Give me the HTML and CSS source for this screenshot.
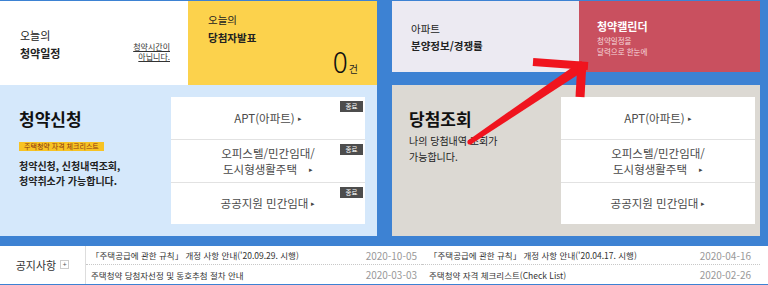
FILE: index.html
```html
<!DOCTYPE html>
<html lang="ko">
<head>
    <meta charset="UTF-8">
    <meta name="viewport" content="width=device-width, initial-scale=1.0">
    <title>청약홈</title>
    <link rel="stylesheet" href="styles.css">
</head>
<body>
    <div class="page">
        <!-- 상단 카드 -->
        <div class="top-row">
            <div class="group group-left">
                <div class="card card-today">
                    <div class="card-title">
                        <p>오늘의</p>
                        <p class="strong">청약일정</p>
                    </div>
                    <a href="#" class="today-link">청약시간이<br>아닙니다.</a>
                </div>
                <div class="card card-winner">
                    <p>오늘의</p>
                    <p class="strong">당첨자발표</p>
                    <div class="count"><span class="num">0</span><span class="unit">건</span></div>
                </div>
            </div>
            <div class="group group-right">
                <div class="card card-apt">
                    <p>아파트</p>
                    <p class="strong">분양정보/경쟁률</p>
                </div>
                <div class="card card-calendar">
                    <p class="strong">청약캘린더</p>
                    <p class="small">청약일정을</p>
                    <p class="small">달력으로 한눈에</p>
                </div>
            </div>
        </div>

        <!-- 청약신청 / 당첨조회 -->
        <div class="mid-row">
            <div class="panel panel-apply">
                <div class="panel-text">
                    <h2>청약신청</h2>
                    <span class="check-badge">주택청약 자격 체크리스트</span>
                    <p class="desc bold">청약신청, 신청내역조회,<br>청약취소가 가능합니다.</p>
                </div>
                <ul class="menu-box">
                    <li><span>APT(아파트)<i class="tri">&#9656;</i></span><em class="end">종료</em></li>
                    <li><span>오피스텔/민간임대/<br>도시형생활주택<i class="tri wide">&#9656;</i></span><em class="end">종료</em></li>
                    <li><span>공공지원 민간임대<i class="tri">&#9656;</i></span><em class="end">종료</em></li>
                </ul>
            </div>
            <div class="panel panel-result">
                <div class="panel-text">
                    <h2>당첨조회</h2>
                    <p class="desc">나의 당첨내역 조회가<br>가능합니다.</p>
                </div>
                <ul class="menu-box">
                    <li><span>APT(아파트)<i class="tri">&#9656;</i></span></li>
                    <li><span>오피스텔/민간임대/<br>도시형생활주택<i class="tri wide">&#9656;</i></span></li>
                    <li><span>공공지원 민간임대<i class="tri">&#9656;</i></span></li>
                </ul>
            </div>
        </div>

        <!-- 공지사항 -->
        <div class="notice">
            <div class="notice-title">공지사항 <span class="plus">+</span></div>
            <ul class="notice-list">
                <li><a href="#">「주택공급에 관한 규칙」 개정 사항 안내('20.09.29. 시행)</a><span class="date">2020-10-05</span></li>
                <li><a href="#">주택청약 당첨자선정 및 동호추첨 절차 안내</a><span class="date">2020-03-03</span></li>
            </ul>
            <ul class="notice-list second">
                <li><a href="#">「주택공급에 관한 규칙」 개정 사항 안내('20.04.17. 시행)</a><span class="date">2020-04-16</span></li>
                <li><a href="#">주택청약 자격 체크리스트(Check List)</a><span class="date">2020-02-26</span></li>
            </ul>
        </div>

        <!-- 빨간 화살표 표시 -->
        <svg class="arrow-mark" width="768" height="285" viewBox="0 0 768 285">
            <polygon points="468.6,139.9 581.2,60.9 586.8,69.1 471.4,144.1" fill="#f0141e"/>
            <circle cx="470" cy="142" r="2.6" fill="#f0141e"/>
            <line x1="533" y1="62" x2="588" y2="66" stroke="#f0141e" stroke-width="8"/>
            <line x1="582" y1="62" x2="580" y2="97" stroke="#f0141e" stroke-width="9"/>
        </svg>
    </div>
</body>
</html>
```

FILE: styles.css
```css
body {
    margin: 0;
    padding: 0;
    background-color: #3d82d3;
    font-family: "Noto Sans CJK KR", "Noto Sans", sans-serif;
    color: #222;
}

p, h2, ul {
    margin: 0;
    padding: 0;
}

ul {
    list-style: none;
}

a {
    color: inherit;
    text-decoration: none;
}

.page {
    position: relative;
    width: 768px;
    height: 285px;
    overflow: hidden;
}

/* top cards */
.top-row {
    display: grid;
    grid-template-columns: 377px 368px;
    column-gap: 15px;
    padding-top: 1px;
    height: 71px;
}

.group {
    display: grid;
    height: 71px;
}

.group-left {
    grid-template-columns: 188px 189px;
}

.group-right {
    grid-template-columns: 187px 181px;
}

.card {
    font-size: 10.5px;
    line-height: 18px;
    box-sizing: border-box;
}

.card .strong {
    font-weight: bold;
}

.card-today {
    background-color: #fff;
    display: flex;
    justify-content: space-between;
    align-items: center;
    padding: 0 18px 4px 20px;
}

.card-today .card-title {
    font-size: 11px;
}

.today-link {
    font-size: 8px;
    line-height: 10.5px;
    text-align: right;
    text-decoration: underline;
    color: #333;
    margin-top: 16px;
}

.card-winner {
    background-color: #fcd24c;
    display: flex;
    flex-direction: column;
    padding: 10px 19px 8px 20px;
}

.card-winner .count {
    margin-top: auto;
    text-align: right;
    line-height: 28px;
}

.card-winner .num {
    font-size: 28px;
    font-weight: 300;
    color: #111;
}

.card-winner .unit {
    font-size: 10px;
    margin-left: 1px;
}

.card-apt {
    background-color: #eceaf2;
    display: flex;
    flex-direction: column;
    justify-content: center;
    padding: 0 0 0 19px;
    line-height: 17px;
}

.card-calendar {
    background-color: #c9505f;
    color: #fff;
    padding: 16px 0 0 18px;
}

.card-calendar .strong {
    font-size: 11px;
}

.card-calendar .small {
    font-size: 7.5px;
    line-height: 11px;
    color: #f6d9dd;
}

/* middle panels */
.mid-row {
    display: grid;
    grid-template-columns: 377px 368px;
    column-gap: 15px;
    margin-top: 13px;
    height: 151px;
}

.panel {
    display: flex;
    box-sizing: border-box;
}

.panel-apply {
    background-color: #d5e8fb;
    padding: 12px 12px 12px 19px;
}

.panel-result {
    background-color: #dcd9d3;
    padding: 12px 5px 12px 17px;
}

.panel-text {
    flex: 1;
    padding-top: 11px;
}

.panel-text h2 {
    font-size: 17px;
    line-height: 22px;
    font-weight: bold;
    color: #111;
}

.check-badge {
    display: inline-block;
    margin-top: 9px;
    padding: 0 5px;
    height: 9px;
    line-height: 9px;
    font-size: 7px;
    background-color: #f7c324;
    color: #8a3512;
}

.desc {
    font-size: 10px;
    line-height: 15px;
    margin-top: 4px;
    color: #222;
}

.desc.bold {
    font-weight: bold;
}

.panel-result .desc {
    margin-top: 3px;
    line-height: 16px;
}

.menu-box {
    width: 194px;
    background-color: #fff;
    display: grid;
    grid-template-rows: repeat(3, 1fr);
}

.menu-box li {
    position: relative;
    display: flex;
    align-items: center;
    justify-content: center;
    text-align: center;
    font-size: 11.5px;
    line-height: 16px;
    color: #4a4a4a;
}

.menu-box li + li {
    border-top: 1px solid #e2e2e2;
}

.tri {
    font-style: normal;
    font-size: 7px;
    margin-left: 3px;
    color: #444;
    vertical-align: 2px;
}

.tri.wide {
    margin-left: 12px;
}

.end {
    position: absolute;
    top: 4px;
    right: 2px;
    width: 23px;
    height: 11px;
    line-height: 11px;
    font-size: 6.5px;
    font-style: normal;
    text-align: center;
    background-color: #4d4d4d;
    color: #fff;
}

/* notice */
.notice {
    display: grid;
    grid-template-columns: 86px 336px 338px;
    margin-top: 10px;
    height: 38px;
    background-color: #fff;
}

.notice-title {
    display: flex;
    align-items: center;
    justify-content: center;
    gap: 4px;
    font-size: 11px;
    color: #333;
    border-right: 1px solid #ddd;
    padding-bottom: 1px;
}

.plus {
    display: inline-block;
    width: 7px;
    height: 7px;
    line-height: 7px;
    font-size: 7px;
    text-align: center;
    border: 1px solid #ccc;
    color: #555;
}

.notice-list {
    display: grid;
    grid-template-rows: 19px 19px;
}

.notice-list li {
    display: flex;
    align-items: center;
    justify-content: space-between;
    padding: 0 5px;
    font-size: 8.5px;
    color: #333;
}

.notice-list li:first-child {
    border-bottom: 1px dotted #c8c8c8;
}

.notice-list.second li {
    padding: 0 9px 0 7px;
}

.date {
    font-size: 10px;
    color: #999;
}

.arrow-mark {
    position: absolute;
    left: 0;
    top: 0;
    pointer-events: none;
}
```
